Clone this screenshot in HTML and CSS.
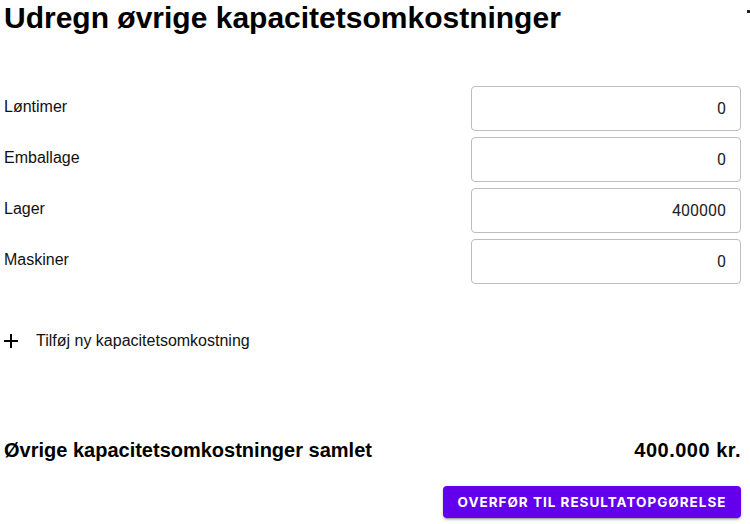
FILE: index.html
```html
<!DOCTYPE html>
<html lang="da">
<head>
<meta charset="utf-8">
<title>Udregn øvrige kapacitetsomkostninger</title>
<link rel="stylesheet" href="styles.css">
</head>
<body>
<div class="page">
  <span class="corner-dot"></span>
  <h1 class="title">Udregn øvrige kapacitetsomkostninger</h1>
  <div class="fields">
    <div class="row"><span class="label">Løntimer</span><div class="input"><span>0</span></div></div>
    <div class="row"><span class="label">Emballage</span><div class="input"><span>0</span></div></div>
    <div class="row"><span class="label">Lager</span><div class="input"><span>400000</span></div></div>
    <div class="row"><span class="label">Maskiner</span><div class="input"><span>0</span></div></div>
  </div>
  <div class="add">
    <svg class="plus" width="14" height="14" viewBox="0 0 14 14"><path d="M7 0v14M0 7h14" stroke="#000" stroke-width="2"/></svg>
    <span>Tilføj ny kapacitetsomkostning</span>
  </div>
  <div class="total">
    <span>Øvrige kapacitetsomkostninger samlet</span>
    <span class="amount">400.000 kr.</span>
  </div>
  <div class="actions">
    <button class="btn">Overfør til resultatopgørelse</button>
  </div>
</div>
</body>
</html>
```
FILE: styles.css
```css
html, body {
  margin: 0;
  padding: 0;
  background: #fff;
}
.page {
  position: relative;
  width: 750px;
  height: 524px;
  box-sizing: border-box;
  padding: 0 9px 0 4px;
  font-family: "Liberation Sans", Arial, sans-serif;
  color: #000;
}
.corner-dot {
  position: absolute;
  top: 10px;
  right: 0;
  width: 3px;
  height: 3px;
  background: #222;
}
.title {
  margin: 0;
  padding-top: 1px;
  font-size: 30px;
  line-height: 34px;
  font-weight: 700;
  letter-spacing: 0;
}
.fields {
  margin-top: 51px;
  display: flex;
  flex-direction: column;
  gap: 6px;
}
.row {
  display: flex;
  justify-content: space-between;
  align-items: flex-start;
}
.label {
  font-size: 16px;
  line-height: 18px;
  padding-top: 12px;
  color: #111;
}
.input {
  width: 270px;
  height: 45px;
  box-sizing: border-box;
  border: 1px solid #bdbdbd;
  border-radius: 4px;
  display: flex;
  align-items: center;
  justify-content: flex-end;
  padding-right: 14px;
  font-family: Roboto, "Liberation Sans", sans-serif;
  font-size: 16px;
  color: #222;
}
.add {
  margin-top: 46px;
  display: flex;
  align-items: center;
  gap: 18px;
  height: 22px;
  font-size: 16px;
  color: #111;
}
.total {
  margin-top: 86px;
  display: flex;
  justify-content: space-between;
  align-items: center;
  font-size: 20px;
  font-weight: 700;
  line-height: 24px;
}
.amount {
  letter-spacing: 0.5px;
}
.actions {
  margin-top: 24px;
  display: flex;
  justify-content: flex-end;
}
.btn {
  width: 298px;
  height: 32px;
  border: none;
  border-radius: 4px;
  background: #6200ee;
  color: #fff;
  font-family: Inter, Roboto, sans-serif;
  font-weight: 700;
  font-size: 13.5px;
  letter-spacing: 1px;
  text-transform: uppercase;
  box-shadow: 0 3px 1px -2px rgba(0,0,0,0.2), 0 2px 2px 0 rgba(0,0,0,0.14), 0 1px 5px 0 rgba(0,0,0,0.12);
  padding: 0;
}
```
